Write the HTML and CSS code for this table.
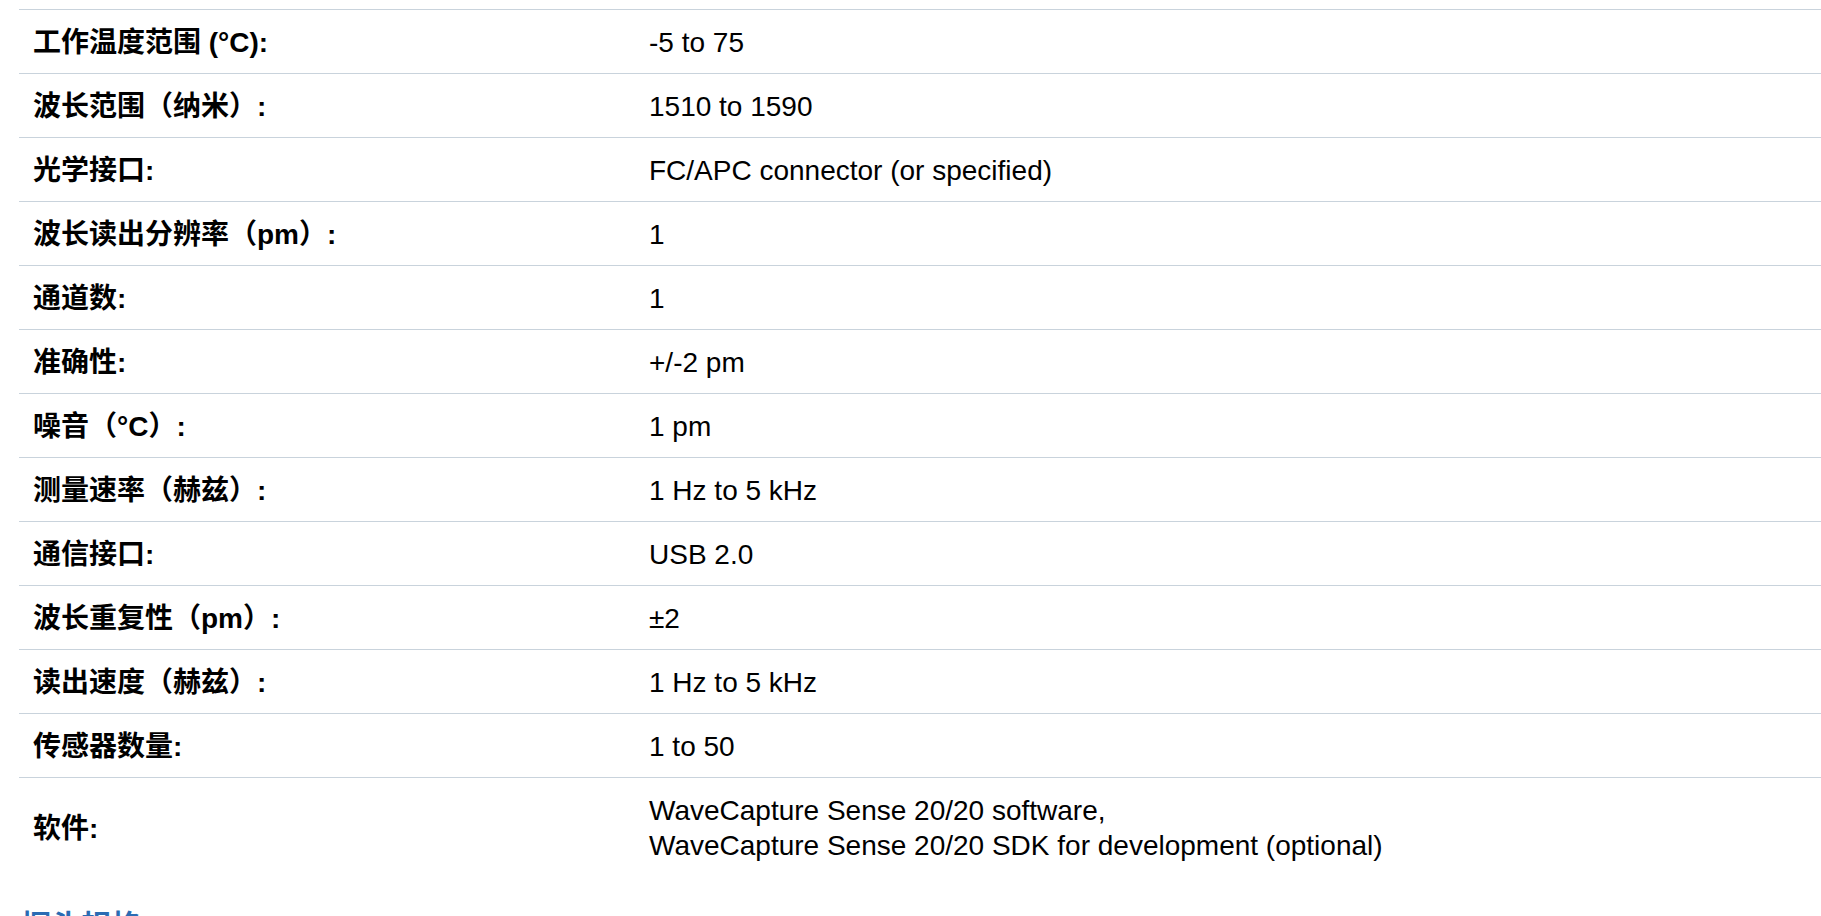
FILE: index.html
```html
<!DOCTYPE html>
<html lang="zh">
<head>
<meta charset="utf-8">
<title>Specs</title>
<link rel="stylesheet" href="styles.css">
</head>
<body>
<div class="page">
  <table class="specs">
    <tbody>
      <tr><th>工作温度范围 (°C):</th><td>-5 to 75</td></tr>
      <tr><th>波长范围（纳米）:</th><td>1510 to 1590</td></tr>
      <tr><th>光学接口:</th><td>FC/APC connector (or specified)</td></tr>
      <tr><th>波长读出分辨率（pm）:</th><td>1</td></tr>
      <tr><th>通道数:</th><td>1</td></tr>
      <tr><th>准确性:</th><td>+/-2 pm</td></tr>
      <tr><th>噪音（°C）:</th><td>1 pm</td></tr>
      <tr><th>测量速率（赫兹）:</th><td>1 Hz to 5 kHz</td></tr>
      <tr><th>通信接口:</th><td>USB 2.0</td></tr>
      <tr><th>波长重复性（pm）:</th><td>±2</td></tr>
      <tr><th>读出速度（赫兹）:</th><td>1 Hz to 5 kHz</td></tr>
      <tr><th>传感器数量:</th><td>1 to 50</td></tr>
      <tr class="last"><th>软件:</th><td>WaveCapture Sense 20/20 software,<br>WaveCapture Sense 20/20 SDK for development (optional)</td></tr>
    </tbody>
  </table>
  <h2 class="section-title">探头规格</h2>
</div>
</body>
</html>
```
FILE: styles.css
```css
html, body {
  margin: 0;
  padding: 0;
  background: #ffffff;
}

body {
  font-family: "Liberation Sans", Arial, "Noto Sans CJK SC", sans-serif;
  color: #000000;
  overflow: hidden;
}

.page {
  padding: 9px 0 0 19px;
}

.specs {
  width: 1802px;
  border-collapse: collapse;
  font-size: 28px;
  line-height: 35px;
}

.specs tr {
  border-top: 1px solid #c9d3dc;
}

.specs th,
.specs td {
  padding: 15px 14px 13px;
  vertical-align: middle;
  text-align: left;
}

.specs th {
  width: 588px;
  font-weight: bold;
}

.specs td {
  font-weight: normal;
}

.section-title {
  margin: 30px 0 0 2px;
  font-size: 30px;
  line-height: 40px;
  font-weight: bold;
  color: #2b6cb3;
}
```
